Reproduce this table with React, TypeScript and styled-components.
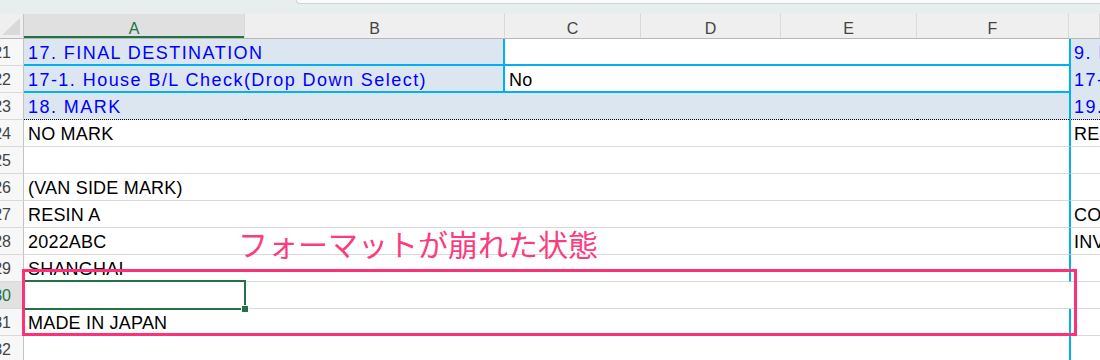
import React from 'react';
import styled, { createGlobalStyle, css } from 'styled-components';

type Edge = 'grid' | 'blue' | 'dots' | 'none';

type CellSpec = {
    text?: string;
    fill?: boolean;
    edge?: Edge;
    blueRight?: boolean;
    blueLeft?: boolean;
    ink?: 'blue' | 'black';
};

type RowSpec = {
    num: number;
    cells: CellSpec[];
    selected?: boolean;
};

const COLS = '24px 221px 260px 136px 140px 136px 152px 31px';

const GlobalStyle = createGlobalStyle`
  body {
    margin: 0;
    background: #ffffff;
    font-family: 'Liberation Sans', Arial, sans-serif;
  }
`;

const Window = styled.div`
  position: relative;
  width: 1100px;
  height: 360px;
  overflow: hidden;
  background: #ffffff;
`;

const TopStrip = styled.div`
  height: 14px;
  background: #e8edee;
  display: flex;
  justify-content: flex-end;
`;

const FormulaEdge = styled.div`
  width: 803px;
  height: 3px;
  background: #fafbfb;
  border: 1px solid #cfd3d4;
  border-top: none;
  border-right: none;
  border-bottom-left-radius: 4px;
`;

const HeaderRow = styled.div`
  display: grid;
  grid-template-columns: ${COLS};
  height: 25px;
  background: #efefef;
  border-bottom: 1px solid #b8b8b8;
  box-sizing: border-box;
`;

const Corner = styled.div`
  border-right: 1px solid #c4c4c4;
  display: flex;
  align-items: flex-end;
  justify-content: flex-end;
  padding: 0 3px 3px 0;
`;

const ColHead = styled.div<{ $active?: boolean }>`
  box-sizing: border-box;
  display: flex;
  justify-content: center;
  padding-top: 6px;
  font-size: 16px;
  line-height: 18px;
  color: #444444;
  border-right: 1px solid #d9d9d9;

  ${p => p.$active && css`
    background: #e0e0e0;
    color: #217346;
    box-shadow: inset 0 -2px 0 #217346;
  `}
`;

const Row = styled.div`
  display: grid;
  grid-template-columns: ${COLS};
  height: 27px;
`;

const RowHead = styled.div<{ $active?: boolean }>`
  box-sizing: border-box;
  display: flex;
  justify-content: flex-end;
  overflow: hidden;
  padding: 4px 12px 0 0;
  font-size: 16px;
  line-height: 20px;
  color: ${p => (p.$active ? '#217346' : '#444444')};
  background: ${p => (p.$active ? '#e1e1e1' : '#f7f7f7')};
  border-right: 1px solid #c4c4c4;
  border-bottom: 1px solid #dadada;
`;

const edgeStyle = (edge: Edge) => {
    switch (edge) {
        case 'blue':
            return 'border-bottom: 2px solid #00b0f0;';
        case 'dots':
            return 'border-bottom: 1px dotted #000000;';
        case 'grid':
            return 'border-bottom: 1px solid #d9d9d9;';
        default:
            return 'border-bottom: none;';
    }
};

const Cell = styled.div<{ $fill?: boolean; $edge: Edge; $blueRight?: boolean; $blueLeft?: boolean }>`
  box-sizing: border-box;
  height: 27px;
  display: flex;
  padding: 4px 0 0 4px;
  white-space: nowrap;
  background: ${p => (p.$fill ? '#dce6f1' : '#ffffff')};
  ${p => edgeStyle(p.$edge)}
  ${p => p.$blueRight && 'border-right: 2px solid #00b0f0;'}
  ${p => p.$blueLeft && 'border-left: 2px solid #00b0f0; padding-left: 3px;'}
`;

const CellText = styled.span<{ $ink?: 'blue' | 'black' }>`
  position: relative;
  z-index: 1;
  font-size: 18px;
  line-height: 20px;
  color: ${p => (p.$ink === 'blue' ? '#0000ff' : '#000000')};
  letter-spacing: ${p => (p.$ink === 'blue' ? '1.45px' : '0.2px')};
`;

const Selection = styled.div`
  position: absolute;
  left: 23px;
  top: 280px;
  width: 223px;
  height: 30px;
  box-sizing: border-box;
  border: 2px solid #217346;
  z-index: 2;
`;

const Handle = styled.div`
  position: absolute;
  right: -5px;
  bottom: -5px;
  width: 6px;
  height: 6px;
  background: #217346;
  border: 1px solid #ffffff;
`;

const Callout = styled.div`
  position: absolute;
  left: 22px;
  top: 269px;
  width: 1055px;
  height: 67px;
  box-sizing: border-box;
  border: 3px solid #ff2f78;
  z-index: 3;
`;

const CalloutText = styled.div`
  position: absolute;
  left: 238px;
  top: 228px;
  font-family: 'Noto Sans CJK JP', sans-serif;
  font-size: 30px;
  line-height: 30px;
  color: #fb3c7e;
  white-space: nowrap;
  z-index: 3;
`;

const blank = (edge: Edge = 'grid', extra: Partial<CellSpec> = {}): CellSpec => ({ edge, ...extra });

const bodyRow = (num: number, a: string, g = '', selected = false): RowSpec => ({
    num,
    selected,
    cells: [
        { text: a, edge: 'grid' },
        blank(), blank(), blank(), blank(), blank(),
        { text: g, edge: 'grid', blueLeft: !selected },
    ],
});

const rows: RowSpec[] = [
    {
        num: 21,
        cells: [
            { text: '17. FINAL DESTINATION', fill: true, edge: 'blue', ink: 'blue' },
            blank('blue', { fill: true, blueRight: true }),
            blank('blue'), blank('blue'), blank('blue'), blank('blue'),
            { text: '9. I', fill: true, edge: 'none', blueLeft: true, ink: 'blue' },
        ],
    },
    {
        num: 22,
        cells: [
            { text: '17-1. House B/L Check(Drop Down Select)', fill: true, edge: 'blue', ink: 'blue' },
            blank('blue', { fill: true, blueRight: true }),
            { text: 'No', edge: 'blue' },
            blank('blue'), blank('blue'), blank('blue'),
            { text: '17-', fill: true, edge: 'none', blueLeft: true, ink: 'blue' },
        ],
    },
    {
        num: 23,
        cells: [
            { text: '18. MARK', fill: true, edge: 'dots', ink: 'blue' },
            blank('dots', { fill: true }), blank('dots', { fill: true }), blank('dots', { fill: true }),
            blank('dots', { fill: true }), blank('dots', { fill: true }),
            { text: '19.', fill: true, edge: 'dots', blueLeft: true, ink: 'blue' },
        ],
    },
    bodyRow(24, 'NO MARK', 'RES'),
    bodyRow(25, ''),
    bodyRow(26, '(VAN SIDE MARK)'),
    bodyRow(27, 'RESIN A', 'CO'),
    bodyRow(28, '2022ABC', 'INV'),
    bodyRow(29, 'SHANGHAI'),
    bodyRow(30, '', '', true),
    bodyRow(31, 'MADE IN JAPAN'),
    bodyRow(32, ''),
];

const letters = ['A', 'B', 'C', 'D', 'E', 'F', ''];

const App = () => {
    return (
        <Window>
            <GlobalStyle/>
            <TopStrip>
                <FormulaEdge/>
            </TopStrip>
            <HeaderRow>
                <Corner>
                    <svg width='18' height='17' viewBox='0 0 18 17'>
                        <polygon points='18,0 18,17 0,17' fill='#d9d9d9'/>
                    </svg>
                </Corner>
                {letters.map((l, i) => (
                    <ColHead key={i} $active={l === 'A'}>{l}</ColHead>
                ))}
            </HeaderRow>
            {rows.map(r => (
                <Row key={r.num}>
                    <RowHead $active={r.selected}>{r.num}</RowHead>
                    {r.cells.map((c, i) => (
                        <Cell key={i} $fill={c.fill} $edge={c.edge ?? 'grid'} $blueRight={c.blueRight}
                              $blueLeft={c.blueLeft}>
                            {c.text && <CellText $ink={c.ink}>{c.text}</CellText>}
                        </Cell>
                    ))}
                </Row>
            ))}
            <Selection>
                <Handle/>
            </Selection>
            <CalloutText>フォーマットが崩れた状態</CalloutText>
            <Callout/>
        </Window>
    );
};

export default App;
